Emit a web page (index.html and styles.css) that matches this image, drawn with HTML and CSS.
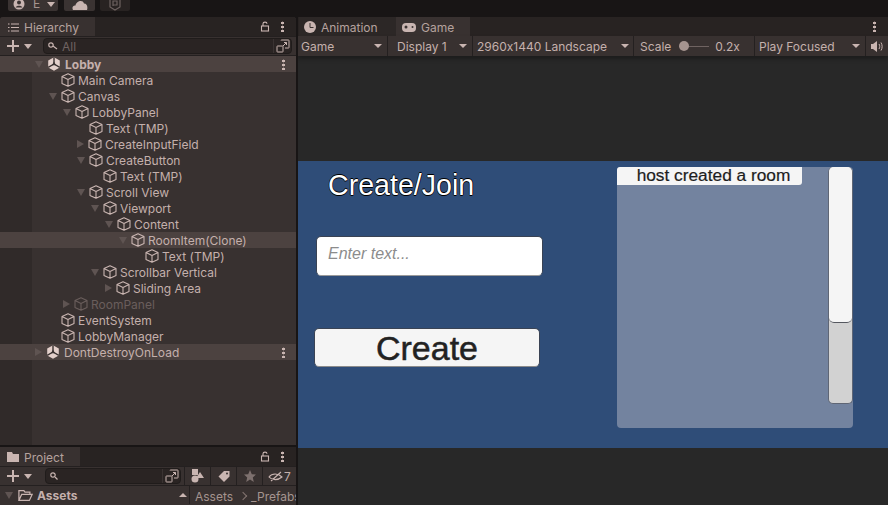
FILE: index.html
```html
<!DOCTYPE html>
<html>

<head>
    <title>Lobby - Unity Editor</title>
    <link rel="stylesheet" href="styles.css">
</head>

<body>
    <svg class="defs" width="0" height="0">
        <symbol id="cube" viewBox="0 0 14 14">
            <path d="M7 .8 13 3.6V10.4L7 13.2 1 10.4V3.6ZM1 3.6 7 6.4 13 3.6M7 6.4V13.2" fill="none" stroke="currentColor" stroke-width="1.1" stroke-linejoin="round" />
        </symbol>
        <symbol id="scene" viewBox="0 0 14 14">
            <path d="M7 .3 12.800 3.600V10.400L7 13.700 1.200 10.400V3.600Z" fill="currentColor" />
            <path d="M7 7V.3M7 7 1.200 10.400M7 7 12.800 10.400" stroke="#3a3231" stroke-width="1.400" />
            <path d="M7 4.600 9.100 8.200H4.900Z" fill="#3a3231" />
        </symbol>
        <symbol id="external" viewBox="0 0 14 14">
            <path d="M5 1.500Q5 1 5.500 1H12.500Q13 1 13 1.500V8.500Q13 9 12.500 9H9M1 7.500Q1 7 1.500 7H6.500Q7 7 7 7.500V12.500Q7 13 6.500 13H1.500Q1 13 1 12.500ZM7 7 10.500 3.500M8 3.500H10.500V6" fill="none" stroke="currentColor" stroke-width="1" />
        </symbol>
        <symbol id="lock" viewBox="0 0 10 11">
            <path d="M3 5V2.800C3 .6 7 .6 7 2.800" fill="none" stroke="currentColor" stroke-width="1.100" />
            <rect x="1.500" y="5" width="7" height="5" fill="none" stroke="currentColor" stroke-width="1.100" />
        </symbol>
    </svg>

    <div class="topbar">
        <div class="top-btn account">
            <svg width="12" height="12" viewBox="0 0 12 12"><circle cx="6" cy="5" r="5.500" fill="#c9b5b1" /><circle cx="6" cy="3.500" r="2" fill="#3a3332" /><path d="M2.500 8.500C3.500 6 8.500 6 9.500 8.500Z" fill="#3a3332" /></svg>
            <span>E</span>
            <i class="tri down"></i>
        </div>
        <div class="top-btn cloud">
            <svg width="16" height="11" viewBox="0 0 16 11"><path d="M1 10C-.5 7 1.500 5 3.500 5.500 4 1 11-1 12 3.500 15 3.500 16 7 15 10Z" fill="#c9b5b1" /></svg>
        </div>
        <div class="top-btn collab">
            <svg width="14" height="12" viewBox="0 0 14 12"><path d="M2 0V8L7 11 12 8V0M5 7V2H9V6H5" fill="none" stroke="#6d6260" stroke-width="1.200" /></svg>
        </div>
    </div>

    <div class="editor">
        <div class="left-col">
            <section class="panel hierarchy">
                <div class="tabs">
                    <div class="tab active">
                        <svg width="11" height="9" viewBox="0 0 11 9"><path d="M0 1H1.500M3 1H11M0 4.500H1.500M3 4.500H11M0 8H1.500M3 8H11" stroke="#c9b5b1" stroke-width="1" /></svg>
                        Hierarchy
                    </div>
                    <div class="tab-tools">
                        <svg class="lock" width="10" height="11"><use href="#lock" /></svg>
                        <span class="kebab"></span>
                    </div>
                </div>
                <div class="toolbar">
                    <span class="plus"></span><i class="tri down small"></i>
                    <div class="search wide">
                        <svg width="10" height="8" viewBox="0 0 10 8"><circle cx="3" cy="3" r="2.200" fill="none" stroke="#c9b5b1" stroke-width="1.200" /><path d="M5 4 9 7" stroke="#c9b5b1" stroke-width="1.200" /></svg>
                        <span>All</span>
                        <svg class="ext" width="14" height="14"><use href="#external" /></svg>
                    </div>
                </div>
                <ul class="tree">
                    <li class="row selected d0"><i class="tri down dim"></i><svg class="ico"><use href="#scene" /></svg><b>Lobby</b><span class="kebab"></span></li>
                    <li class="row d1"><i class="tri none"></i><svg class="ico"><use href="#cube" /></svg>Main Camera</li>
                    <li class="row d1"><i class="tri down dim"></i><svg class="ico"><use href="#cube" /></svg>Canvas</li>
                    <li class="row d2"><i class="tri down dim"></i><svg class="ico"><use href="#cube" /></svg>LobbyPanel</li>
                    <li class="row d3"><i class="tri none"></i><svg class="ico"><use href="#cube" /></svg>Text (TMP)</li>
                    <li class="row d3"><i class="tri right dim"></i><svg class="ico"><use href="#cube" /></svg>CreateInputField</li>
                    <li class="row d3"><i class="tri down dim"></i><svg class="ico"><use href="#cube" /></svg>CreateButton</li>
                    <li class="row d4"><i class="tri none"></i><svg class="ico"><use href="#cube" /></svg>Text (TMP)</li>
                    <li class="row d3"><i class="tri down dim"></i><svg class="ico"><use href="#cube" /></svg>Scroll View</li>
                    <li class="row d4"><i class="tri down dim"></i><svg class="ico"><use href="#cube" /></svg>Viewport</li>
                    <li class="row d5"><i class="tri down dim"></i><svg class="ico"><use href="#cube" /></svg>Content</li>
                    <li class="row hover d6"><i class="tri down dim"></i><svg class="ico"><use href="#cube" /></svg>RoomItem(Clone)</li>
                    <li class="row d7"><i class="tri none"></i><svg class="ico"><use href="#cube" /></svg>Text (TMP)</li>
                    <li class="row d4"><i class="tri down dim"></i><svg class="ico"><use href="#cube" /></svg>Scrollbar Vertical</li>
                    <li class="row d5"><i class="tri right dim"></i><svg class="ico"><use href="#cube" /></svg>Sliding Area</li>
                    <li class="row disabled d2"><i class="tri right dim"></i><svg class="ico"><use href="#cube" /></svg>RoomPanel</li>
                    <li class="row d1"><i class="tri none"></i><svg class="ico"><use href="#cube" /></svg>EventSystem</li>
                    <li class="row d1"><i class="tri none"></i><svg class="ico"><use href="#cube" /></svg>LobbyManager</li>
                    <li class="row hover d0"><i class="tri right dim"></i><svg class="ico"><use href="#scene" /></svg>DontDestroyOnLoad<span class="kebab"></span></li>
                </ul>
            </section>

            <section class="panel project">
                <div class="tabs">
                    <div class="tab active">
                        <svg width="12" height="10" viewBox="0 0 12 10"><path d="M0 0H5L6 2H12V10H0Z" fill="#c9b5b1" /></svg>
                        Project
                    </div>
                    <div class="tab-tools">
                        <svg class="lock" width="10" height="11"><use href="#lock" /></svg>
                        <span class="kebab"></span>
                    </div>
                </div>
                <div class="toolbar">
                    <span class="plus"></span><i class="tri down small"></i>
                    <div class="search short">
                        <svg width="8" height="8" viewBox="0 0 8 8"><circle cx="3" cy="3" r="2.200" fill="none" stroke="#c9b5b1" stroke-width="1.200" /><path d="M5 5 7.500 7.500" stroke="#c9b5b1" stroke-width="1.200" /></svg>
                        <svg class="ext" width="14" height="14"><use href="#external" /></svg>
                    </div>
                    <div class="tool-btn">
                        <svg width="13" height="14" viewBox="0 0 13 14"><rect x="1" y="0" width="6" height="6" fill="#c9b5b1" /><path d="M9 3 13 9H5Z" fill="#c9b5b1" /><circle cx="4" cy="10" r="3.500" fill="#c9b5b1" /></svg>
                    </div>
                    <div class="tool-btn">
                        <svg width="12" height="12" viewBox="0 0 12 12"><path d="M6 1H11.500V6.500L6 12 .5 6.500Z" fill="#c9b5b1" /><circle cx="9" cy="3.500" r="1" fill="#3a3231" /></svg>
                    </div>
                    <div class="tool-btn">
                        <svg width="12" height="12" viewBox="0 0 12 12"><path d="M6 0 7.800 4.200 12 4.600 8.800 7.400 9.800 12 6 9.500 2.200 12 3.200 7.400 0 4.600 4.200 4.200Z" fill="#7d706e" /></svg>
                    </div>
                    <div class="tool-btn eye">
                        <svg width="15" height="11" viewBox="0 0 15 11"><path d="M1 6C4 2 10 2 14 6 10 9.500 4 9.500 1 6ZM3 10 13 1" fill="none" stroke="#c9b5b1" stroke-width="1.100" /></svg>
                        7
                    </div>
                </div>
                <div class="assets">
                    <div class="assets-head">
                        <i class="tri down dim"></i>
                        <svg class="folder" width="15" height="11" viewBox="0 0 13 10"><path d="M.5 9.500V.5H5L6 2H10.500V4M.5 9.500 3 4H12.500L10 9.500Z" fill="none" stroke="#c9b5b1" stroke-width="1.100" /></svg>
                        <b>Assets</b>
                        <i class="tri up"></i>
                    </div>
                    <div class="crumbs">Assets<span class="sep"></span>_Prefabs</div>
                </div>
            </section>
        </div>

        <section class="panel game">
            <div class="tabs">
                <div class="tab plain">
                    <svg width="12" height="12" viewBox="0 0 12 12"><circle cx="6" cy="6" r="6" fill="#c9b5b1" /><path d="M6 2V6.500H9.500" fill="none" stroke="#3a3231" stroke-width="1" /></svg>
                    Animation
                </div>
                <div class="tab active">
                    <svg width="14" height="9" viewBox="0 0 14 9"><rect x="0" y="0" width="14" height="9" rx="4" fill="#c9b5b1" /><circle cx="4" cy="4" r="1.500" fill="#3a3231" /><circle cx="10.500" cy="4" r="1" fill="#3a3231" /></svg>
                    Game
                </div>
                <div class="tab-tools"><span class="kebab"></span></div>
            </div>
            <div class="game-bar">
                <div class="seg seg-game">Game<i class="tri down"></i></div>
                <div class="seg seg-display">Display 1<i class="tri down"></i></div>
                <div class="seg seg-res">2960x1440 Landscape<i class="tri down"></i></div>
                <div class="seg seg-scale">Scale<span class="slider"><span class="knob"></span></span>0.2x</div>
                <div class="seg seg-play">Play Focused<i class="tri down"></i></div>
                <div class="seg seg-mute">
                    <svg width="12" height="11" viewBox="0 0 12 11"><path d="M0 3H2L6 0V11L2 8H0Z" fill="#c9b5b1" /><path d="M8 3C9 4.500 9 6.500 8 8M10 1.500C11.500 4 11.500 7 10 9.500" fill="none" stroke="#c9b5b1" /></svg>
                </div>
            </div>
            <div class="viewport">
                <div class="game-view">
                    <div class="lobby-form">
                        <h1 class="title">Create/Join</h1>
                        <div class="input">Enter text...</div>
                        <div class="create">Create</div>
                    </div>
                    <div class="scroll-view">
                        <div class="room-list">
                            <div class="room-item">host created a room</div>
                        </div>
                        <div class="scrollbar">
                            <div class="handle"></div>
                        </div>
                    </div>
                </div>
            </div>
        </section>
    </div>
</body>

</html>
```
FILE: styles.css
```css
* {
    box-sizing: border-box;
}

html,
body {
    height: 100%;
}

body {
    margin: 0;
    overflow: hidden;
    font-family: 'Inter', sans-serif;
    font-size: 12px;
    font-feature-settings: "calt" 0;
    background-color: #181515;
    color: #c4b0ac;
}

.defs {
    position: absolute;
}

ul {
    list-style: none;
    margin: 0;
    padding: 0;
}

b {
    font-weight: 700;
}

/* top strip */
.topbar {
    display: flex;
    height: 17px;
    padding-left: 8px;
}

.top-btn {
    display: flex;
    align-items: flex-end;
    height: 11px;
    overflow: hidden;
    background-color: #3a3332;
    border-radius: 0 0 2px 2px;
}

.account {
    width: 50px;
    margin-right: 6px;
    padding-left: 5px;
    gap: 8px;
    color: #a5948f;
}

.account .tri {
    margin: 0 0 4px -1px;
}

.cloud {
    width: 31px;
    margin-right: 5px;
    justify-content: center;
}

.collab {
    width: 30px;
    justify-content: center;
    background-color: #282322;
}

/* panels */
.editor {
    display: flex;
    height: 488px;
}

.left-col {
    display: flex;
    flex-direction: column;
    width: 296px;
    margin-right: 2px;
}

.panel {
    display: flex;
    flex-direction: column;
    background-color: #383130;
    overflow: hidden;
}

.hierarchy {
    height: 428px;
    margin-bottom: 2px;
    border-radius: 3px 3px 0 0;
}

.project {
    flex: 1;
}

.game {
    flex: 1;
}

.tabs {
    display: flex;
    flex: none;
    height: 19px;
    background-color: #282322;
}

.tab {
    display: flex;
    align-items: center;
    gap: 5px;
    height: 19px;
    padding-top: 1px;
    color: #b5a29e;
}

.hierarchy .tab {
    width: 95px;
    padding-left: 8px;
    background-color: #383130;
}

.project .tab {
    width: 80px;
    padding-left: 7px;
    background-color: #383130;
}

.game .tab.plain {
    width: 97px;
    margin-left: 1px;
    padding-left: 5px;
    background-color: #2c2726;
}

.game .tab.active {
    width: 74px;
    padding-left: 6px;
    background-color: #383130;
}

.tab-tools {
    display: flex;
    align-items: center;
    gap: 11px;
    margin-left: auto;
    padding-right: 12px;
}

.kebab {
    width: 3px;
    height: 11px;
    background: radial-gradient(circle, #c9b5b1 1.300px, transparent 1.600px) 0 0 / 3px 4px;
}

.lock {
    color: #c9b5b1;
}

.toolbar {
    display: flex;
    align-items: center;
    flex: none;
    height: 20px;
    padding-left: 7px;
    border-top: 1px solid #242020;
    border-bottom: 1px solid #242020;
}

.plus {
    width: 12px;
    height: 12px;
    background:
        linear-gradient(#c9b5b1, #c9b5b1) center / 12px 2px no-repeat,
        linear-gradient(#c9b5b1, #c9b5b1) center / 2px 12px no-repeat;
}

.tri {
    display: block;
    flex: none;
    width: 0;
    height: 0;
    border-style: solid;
    border-color: transparent;
}

.tri.down {
    border-width: 5px 4px 0;
    border-top-color: #c9b5b1;
}

.tri.down.small {
    margin-left: 5px;
}

.tri.up {
    border-width: 0 4px 4px;
    border-bottom-color: #c9b5b1;
}

.tri.right {
    border-width: 4px 0 4px 7px;
    border-left-color: #5f5452;
}

.tri.down.dim {
    border-width: 7px 4px 0;
    border-top-color: #5f5452;
}

.tri.none {
    width: 8px;
}

.search {
    display: flex;
    align-items: center;
    height: 16px;
    background-color: #2a2423;
    border: 1px solid #201c1b;
    border-radius: 4px;
    padding-left: 4px;
    gap: 4px;
    color: #6f6361;
}

.search.wide {
    width: 249px;
    margin-left: 11px;
}

.search.short {
    width: 136px;
    margin-left: 13px;
    margin-right: 3px;
}

.search .ext {
    box-sizing: content-box;
    height: 14px;
    margin-left: auto;
    margin-right: 1px;
    padding-left: 2px;
    border-left: 1px solid #3a3332;
    color: #c9b5b1;
}

/* tree */
.tree {
    flex: 1;
    background: linear-gradient(90deg, #302a29 32px, #383130 32px);
}

.row {
    display: flex;
    align-items: center;
    height: 16px;
    white-space: nowrap;
}

.row .tri {
    margin-right: 4px;
}

.row .ico {
    flex: none;
    width: 14px;
    height: 14px;
    margin-right: 3px;
    color: #c9b5b1;
}

.row.d0 .ico {
    margin-right: 4px;
    color: #e3cfca;
}

.selected,
.hover {
    background-color: #4c4240;
}

.row .kebab {
    margin-left: auto;
    margin-right: 11px;
}

.disabled,
.disabled .ico {
    color: #6a5e5c;
}

.d0 { padding-left: 35px; }
.d1 { padding-left: 49px; }
.d2 { padding-left: 63px; }
.d3 { padding-left: 77px; }
.d4 { padding-left: 91px; }
.d5 { padding-left: 105px; }
.d6 { padding-left: 119px; }
.d7 { padding-left: 133px; }

/* project strip */
.tool-btn {
    display: flex;
    align-items: center;
    justify-content: center;
    gap: 1px;
    width: 26px;
    height: 18px;
    border-left: 1px solid #242020;
}

.tool-btn.eye {
    flex: 1;
}

.assets {
    display: flex;
    flex: 1;
}

.assets-head {
    display: flex;
    flex: none;
    align-items: center;
    width: 190px;
    height: 18px;
    padding-left: 5px;
    gap: 5px;
    border-right: 1px solid #242020;
}

.assets-head .folder {
    margin-right: -1px;
}

.assets-head .tri.up {
    margin-left: auto;
    margin-right: 2px;
}

.crumbs {
    display: flex;
    align-items: center;
    height: 20px;
    padding-left: 5px;
    white-space: nowrap;
    color: #a5948f;
}

.sep {
    width: 6px;
    height: 6px;
    margin: 0 5px 0 7px;
    border-top: 1px solid #857672;
    border-right: 1px solid #857672;
    transform: rotate(45deg);
}

/* game toolbar */
.game-bar {
    display: flex;
    flex: none;
    height: 20px;
    box-shadow: 0 3px 4px rgba(0, 0, 0, .3);
    z-index: 1;
}

.seg {
    display: flex;
    align-items: center;
    padding: 0 5px 0 3px;
    background-color: #383130;
    border-right: 1px solid #242020;
    white-space: nowrap;
}

.seg .tri.down {
    border-width: 4px 4px 0;
    margin-left: auto;
}

.seg-game { width: 90px; }
.seg-display { width: 85px; padding-left: 9px; }
.seg-res { width: 161px; padding-left: 4px; padding-right: 4px; }
.seg-scale { width: 121px; padding-left: 6px; }
.seg-play { width: 111px; padding-left: 4px; padding-right: 5px; }
.seg-mute { flex: 1; padding-left: 5px; border: none; }

.slider {
    position: relative;
    width: 30px;
    height: 1px;
    margin: 0 6px 0 8px;
    background-color: #6f6361;
}

.knob {
    position: absolute;
    left: 0;
    top: -5px;
    width: 10px;
    height: 10px;
    border-radius: 50%;
    background-color: #a5948f;
}

/* game view */
.viewport {
    flex: 1;
    padding-top: 105px;
    background-color: #282828;
}

.game-view {
    display: flex;
    height: 287px;
    background-color: #2f4d78;
    font-family: 'Liberation Sans', sans-serif;
}

.lobby-form {
    display: flex;
    flex-direction: column;
    width: 319px;
}

.title {
    margin: 7px 0 0 30px;
    height: 34px;
    line-height: 34px;
    font-size: 28.600px;
    font-weight: 400;
    color: #fff;
    text-shadow: .6px 0 0 #000, -.6px 0 0 #000, 0 .6px 0 #000, 0 -.6px 0 #000;
}

.input {
    width: 227px;
    height: 40px;
    margin: 34px 0 0 18px;
    padding: 0 11px;
    line-height: 34px;
    font-size: 16px;
    font-style: italic;
    color: #8c8c8c;
    background-color: #fff;
    border: 1px solid #3a4354;
    border-bottom-color: #9a9a9a;
    border-radius: 5px;
}

.create {
    width: 226px;
    height: 39px;
    margin: 52px 0 0 16px;
    line-height: 39px;
    text-align: center;
    font-size: 34px;
    color: #222;
    -webkit-text-stroke: .5px #222;
    background-color: #f5f5f5;
    border: 1px solid #3a4354;
    border-bottom-color: #8b8b8b;
    border-radius: 5px;
}

.scroll-view {
    display: flex;
    width: 236px;
    height: 261px;
    margin-top: 6px;
    background-color: #73839f;
    border-radius: 4px;
}

.room-list {
    flex: 1;
}

.room-item {
    width: 185px;
    height: 18px;
    padding-left: 8px;
    line-height: 17px;
    text-align: center;
    font-size: 17.300px;
    color: #1d1d1d;
    -webkit-text-stroke: .2px #1d1d1d;
    background-color: #f5f5f5;
    border-radius: 3px 0 3px 0;
}

.scrollbar {
    width: 25px;
    height: 237px;
    background-color: #d2d2d2;
    border: 1px solid #5f6675;
    border-top: none;
    border-radius: 5px;
}

.handle {
    height: 156px;
    background-color: #f5f5f5;
    border-bottom: 1px solid #55585f;
    border-radius: 5px;
}
```
